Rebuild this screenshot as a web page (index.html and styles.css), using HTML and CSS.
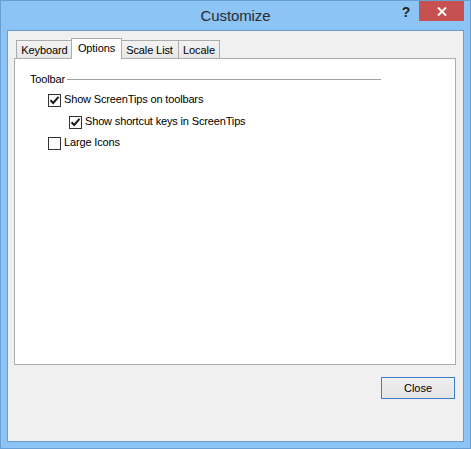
FILE: index.html
```html
<!DOCTYPE html>
<html>
<head>
<meta charset="utf-8">
<link rel="stylesheet" href="styles.css">
</head>
<body>
<div class="window">
  <div class="titlebar">
    <div class="spacer"></div>
    <div class="title">Customize</div>
    <div class="controls">
      <span class="help">?</span>
      <span class="close-x">
        <svg width="10" height="9" viewBox="0 0 10 9"><path d="M1 0.5 L9 8.5 M9 0.5 L1 8.5" stroke="#fff" stroke-width="2" fill="none"/></svg>
      </span>
    </div>
  </div>
  <div class="client">
    <div class="tabs">
      <div class="tab tab-keyboard">Keyboard</div>
      <div class="tab tab-options active">Options</div>
      <div class="tab tab-scale">Scale List</div>
      <div class="tab tab-locale">Locale</div>
    </div>
    <div class="panel">
      <div class="group-head">
        <span class="group-label">Toolbar</span>
        <span class="group-line"></span>
      </div>
      <div class="row lvl1 r1">
        <span class="cb"><svg width="11" height="11" viewBox="0 0 11 11"><path d="M1.5 5.2 L4.2 8 L9.5 1.8" stroke="#1a1a1a" stroke-width="2" fill="none"/></svg></span>
        <span class="lbl">Show ScreenTips on toolbars</span>
      </div>
      <div class="row lvl2 r2">
        <span class="cb"><svg width="11" height="11" viewBox="0 0 11 11"><path d="M1.5 5.2 L4.2 8 L9.5 1.8" stroke="#1a1a1a" stroke-width="2" fill="none"/></svg></span>
        <span class="lbl">Show shortcut keys in ScreenTips</span>
      </div>
      <div class="row lvl1 r3">
        <span class="cb"></span>
        <span class="lbl">Large Icons</span>
      </div>
    </div>
    <div class="buttons">
      <button class="btn">Close</button>
    </div>
  </div>
</div>
</body>
</html>
```
FILE: styles.css
```css
html, body {
  margin: 0;
  padding: 0;
  width: 471px;
  height: 449px;
  overflow: hidden;
  font-family: "Liberation Sans", Arial, sans-serif;
}
.window {
  box-sizing: border-box;
  width: 471px;
  height: 449px;
  border: 1px solid #6a9fd3;
  background: #8cc4f6;
  display: flex;
  flex-direction: column;
  padding: 0 6px 6px 6px;
}
.titlebar {
  height: 29px;
  display: grid;
  grid-template-columns: 1fr auto 1fr;
  align-items: start;
}
.title {
  font-size: 15px;
  color: #2b2b2b;
  padding-top: 6px;
  letter-spacing: -0.1px;
}
.controls {
  justify-self: end;
  display: flex;
  align-items: flex-start;
}
.help {
  font-weight: bold;
  font-size: 14px;
  color: #222;
  width: 12px;
  margin-right: 7px;
  padding-top: 3px;
  text-align: center;
}
.close-x {
  width: 45px;
  height: 20px;
  background: #c75050;
  display: flex;
  align-items: center;
  justify-content: center;
}
.client {
  flex: 1;
  border: 1px solid #6d9acb;
  background: #f0f0f0;
  display: flex;
  flex-direction: column;
  padding: 7px 7px 0 6px;
}
.tabs {
  display: flex;
  height: 20px;
  align-items: flex-end;
  padding-left: 2px;
  position: relative;
  z-index: 1;
}
.tab {
  box-sizing: border-box;
  height: 18px;
  border: 1px solid #acacac;
  border-bottom: none;
  background: linear-gradient(#f3f3f3, #e7e7e7);
  font-size: 11px;
  letter-spacing: -0.1px;
  color: #000;
  padding: 3px 0 0 0;
  text-align: center;
  margin-left: -1px;
}
.tab:first-child { margin-left: 0; }
.tab-keyboard { width: 57px; }
.tab-options { width: 51px; }
.tab-scale { width: 59px; }
.tab-locale { width: 42px; }
.tab.active {
  height: 21px;
  margin: 0 -2px -1px -2px;
  background: #fff;
  padding-top: 3px;
  position: relative;
  z-index: 2;
}
.tab-options.active + .tab { margin-left: 0; }
.panel {
  box-sizing: border-box;
  height: 307px;
  border: 1px solid #acacac;
  background: #fff;
  padding: 13px 0 0 15px;
  font-size: 11px;
  letter-spacing: -0.15px;
}
.group-head {
  display: flex;
  align-items: center;
  height: 14px;
}
.group-line {
  width: 314px;
  height: 1px;
  background: #a0a0a0;
  margin-left: 2px;
  margin-top: 1px;
}
.row {
  display: flex;
  align-items: center;
  height: 13px;
}
.lvl1 { padding-left: 18px; }
.lvl2 { padding-left: 39px; }
.r1 { margin-top: 8px; }
.r2 { margin-top: 9px; }
.r3 { margin-top: 8px; }
.cb {
  box-sizing: border-box;
  width: 13px;
  height: 13px;
  border: 1px solid #333;
  background: #fff;
  display: flex;
  align-items: center;
  justify-content: center;
}
.lbl {
  margin-left: 3px;
  color: #000;
  position: relative;
  top: -2px;
}
.buttons {
  display: flex;
  justify-content: flex-end;
  padding-top: 12px;
  padding-right: 1px;
}
.btn {
  box-sizing: border-box;
  width: 74px;
  height: 22px;
  border: 1px solid #3c7fd1;
  background: linear-gradient(#efefef, #e3e3e3);
  font-family: "Liberation Sans", Arial, sans-serif;
  font-size: 11px;
  color: #000;
  padding: 0;
  margin: 0;
}
```
